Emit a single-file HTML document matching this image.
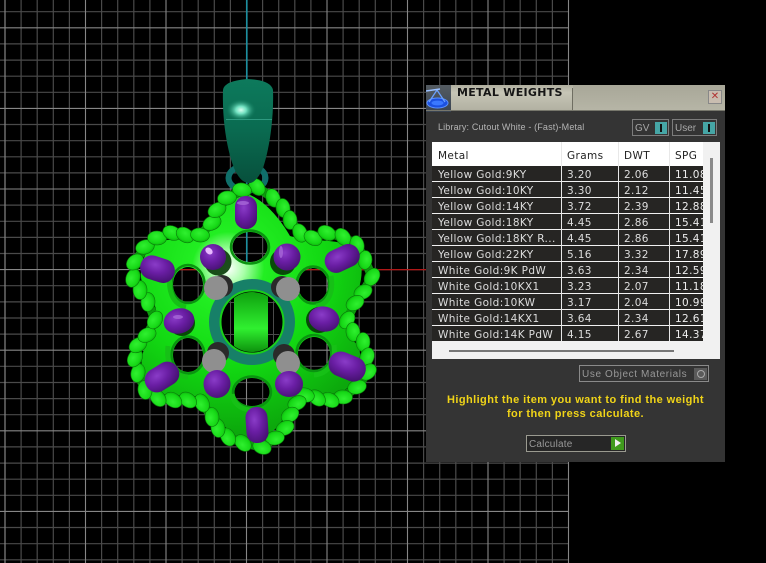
<!DOCTYPE html>
<html><head><meta charset="utf-8"><style>
html,body{margin:0;padding:0;background:#000;width:766px;height:563px;overflow:hidden}
#s{position:absolute;left:0;top:0}
#p{position:absolute;left:426px;top:85px;width:299px;height:377px;background:#343434;font-family:"DejaVu Sans","Liberation Sans",sans-serif;color:#ddd}
#p div{position:absolute;white-space:nowrap}
.t{left:6px;top:57px;width:288px;height:217px;background:#f1f1f1}
.h{background:#fff;left:6px;top:57px;width:271px;height:24px;overflow:hidden}
.c{font-size:10.5px;letter-spacing:.37px;line-height:19px}
.r{left:6px;width:271px;height:15px;background:#262523;color:#eee}
.sep{width:1px;background:#e8e8e8;top:57px;height:199px}
</style></head><body>
<svg id="s" width="766" height="563" viewBox="0 0 766 563">
<defs>
<radialGradient id="body" gradientUnits="userSpaceOnUse" cx="228" cy="268" r="165">
<stop offset="0" stop-color="#ffffff"/><stop offset=".1" stop-color="#aaffaa"/><stop offset=".22" stop-color="#22ee22"/><stop offset=".6" stop-color="#12d812"/><stop offset="1" stop-color="#0ca80c"/></radialGradient>
<linearGradient id="bale" x1="0" x2="0" y1="0" y2="1"><stop offset="0" stop-color="#0d7a5c"/><stop offset=".5" stop-color="#0a6a50"/><stop offset="1" stop-color="#07503c"/></linearGradient>
<radialGradient id="hl"><stop offset="0" stop-color="#d8fff0"/><stop offset=".35" stop-color="#70e0c0"/><stop offset="1" stop-color="#0d7a5c" stop-opacity="0"/></radialGradient>
<radialGradient id="pur" cx=".4" cy=".35" r=".75"><stop offset="0" stop-color="#8a3cc8"/><stop offset=".45" stop-color="#6a1ea4"/><stop offset="1" stop-color="#42106c"/></radialGradient>
<radialGradient id="bead" cx=".45" cy=".38" r=".72"><stop offset="0" stop-color="#30f030"/><stop offset=".65" stop-color="#16d816"/><stop offset="1" stop-color="#0aa00a"/></radialGradient>
<linearGradient id="bar" x1="0" x2="0" y1="0" y2="1"><stop offset="0" stop-color="#0c9c0c"/><stop offset=".6" stop-color="#30f030"/><stop offset="1" stop-color="#0a8a0a"/></linearGradient>
<clipPath id="inner"><circle cx="252" cy="322" r="30"/></clipPath>
<ellipse id="b" rx="9.5" ry="7" fill="url(#bead)" stroke="#0a7a0a" stroke-width=".6"/>
</defs>
<path fill="none" stroke="#4a4a4a" stroke-width="1.2" d="M5 0V563M21.1 0V563M37.2 0V563M53.3 0V563M69.4 0V563M101.6 0V563M117.7 0V563M133.8 0V563M149.9 0V563M182.1 0V563M198.2 0V563M214.3 0V563M230.4 0V563M262.6 0V563M278.7 0V563M294.8 0V563M310.9 0V563M343.1 0V563M359.2 0V563M375.3 0V563M391.4 0V563M423.6 0V563M439.7 0V563M455.8 0V563M471.9 0V563M504.1 0V563M520.2 0V563M536.3 0V563M552.4 0V563
M0 11.7H569M0 43.9H569M0 60.1H569M0 76.2H569M0 92.3H569M0 124.5H569M0 140.7H569M0 156.8H569M0 172.9H569M0 205.1H569M0 221.3H569M0 237.4H569M0 253.5H569M0 285.7H569M0 301.9H569M0 318H569M0 334.1H569M0 366.3H569M0 382.5H569M0 398.6H569M0 414.7H569M0 446.9H569M0 463.1H569M0 479.2H569M0 495.3H569M0 527.5H569M0 543.7H569M0 559.8H569"/>
<path fill="none" stroke="#868686" stroke-width="1.1" d="M5 0V563M85.5 0V563M166 0V563M246.5 0V563M327 0V563M407.5 0V563M488 0V563M568.5 0V563M0 27.8H569M0 108.4H569M0 189H569M0 269.6H569M0 350.2H569M0 430.8H569M0 511.4H569"/>
<rect x="246" y="0" width="1.6" height="262" fill="#1d8f9f"/>
<rect x="170" y="269" width="256" height="1.3" fill="#b01818"/>

<ellipse cx="247" cy="178" rx="18.5" ry="12.5" fill="none" stroke="#0f6f6a" stroke-width="6"/>

<!-- body with holes -->
<path fill="url(#body)" fill-rule="evenodd" d="M247 194 C262 198 280 218 290 236 C310 243 335 237 356 248 C366 265 362 290 350 305 C340 320 345 335 358 345 C364 365 360 380 342 392 C322 398 305 388 294 398 C288 415 272 440 252 442 C232 438 216 420 206 400 C195 392 170 399 148 390 C138 375 140 350 150 338 C160 322 158 305 148 294 C136 280 140 258 153 243 C172 236 195 244 206 232 C213 218 230 198 247 194 Z
M250 232 a17.5 15 0 1 0 .01 0 Z M188 267 a15 17.5 0 1 0 .01 0 Z M313 268 a15 17 0 1 0 .01 0 Z M188 338 a15 17 0 1 0 .01 0 Z M314 337 a16 16.5 0 1 0 .01 0 Z M252 378 a17.5 14 0 1 0 .01 0 Z"/>
<g fill="none" stroke="#0a9410" stroke-width="2.5">
<ellipse cx="250" cy="247" rx="19" ry="16.5"/>
<ellipse cx="188" cy="284" rx="16.5" ry="19"/>
<ellipse cx="313" cy="285" rx="16.5" ry="18.5"/>
<ellipse cx="188" cy="355" rx="16.5" ry="18.5"/>
<ellipse cx="314" cy="353" rx="17.5" ry="18"/>
<ellipse cx="252" cy="392" rx="19" ry="15.5"/>
</g>
<g fill="none" stroke="#16c016" stroke-width="5">
<path d="M170 275 C168 290 172 304 186 307"/>
<path d="M331 276 C334 292 328 305 316 306"/>
<path d="M168 346 C166 362 172 376 188 377"/>
<path d="M334 345 C336 362 328 374 314 375"/>
<path d="M232 394 C234 406 244 411 256 410"/>
</g>

<!-- twisted rope -->
<path fill="none" stroke="#0c9c0c" stroke-width="9" stroke-linejoin="round" d="M257 187 L273 198 L283 208 L290 220 L300 233 L313 238 L327 233 L343 237 L357 245 L365 260 L372 277 L363 292 L355 303 L347 320 L353 332 L363 342 L367 357 L368 372 L357 387 L343 397 L330 400 L317 398 L305 395 L297 403 L290 415 L285 428 L275 438 L262 447 L243 443 L228 437 L218 428 L212 417 L202 403 L188 400 L173 400 L158 398 L145 390 L138 373 L135 358 L138 345 L147 335 L155 320 L148 302 L140 290 L133 278 L135 262 L145 247 L157 238 L172 233 L185 235 L200 235 L212 223 L217 210 L227 198 L242 190 Z"/>
<g>
<use href="#b" transform="translate(257 187) rotate(50)"/>
<use href="#b" transform="translate(273 198) rotate(69)"/>
<use href="#b" transform="translate(283 208) rotate(82)"/>
<use href="#b" transform="translate(290 220) rotate(86)"/>
<use href="#b" transform="translate(300 233) rotate(68)"/>
<use href="#b" transform="translate(313 238) rotate(30)"/>
<use href="#b" transform="translate(327 233) rotate(28)"/>
<use href="#b" transform="translate(343 237) rotate(52)"/>
<use href="#b" transform="translate(357 245) rotate(76)"/>
<use href="#b" transform="translate(365 260) rotate(95)"/>
<use href="#b" transform="translate(372 277) rotate(124)"/>
<use href="#b" transform="translate(363 292) rotate(153)"/>
<use href="#b" transform="translate(355 303) rotate(150)"/>
<use href="#b" transform="translate(347 320) rotate(124)"/>
<use href="#b" transform="translate(353 332) rotate(84)"/>
<use href="#b" transform="translate(363 342) rotate(91)"/>
<use href="#b" transform="translate(367 357) rotate(110)"/>
<use href="#b" transform="translate(368 372) rotate(138)"/>
<use href="#b" transform="translate(357 387) rotate(165)"/>
<use href="#b" transform="translate(343 397) rotate(184)"/>
<use href="#b" transform="translate(330 400) rotate(208)"/>
<use href="#b" transform="translate(317 398) rotate(221)"/>
<use href="#b" transform="translate(305 395) rotate(196)"/>
<use href="#b" transform="translate(297 403) rotate(157)"/>
<use href="#b" transform="translate(290 415) rotate(146)"/>
<use href="#b" transform="translate(285 428) rotate(153)"/>
<use href="#b" transform="translate(275 438) rotate(170)"/>
<use href="#b" transform="translate(262 447) rotate(201)"/>
<use href="#b" transform="translate(243 443) rotate(226)"/>
<use href="#b" transform="translate(228 437) rotate(241)"/>
<use href="#b" transform="translate(218 428) rotate(261)"/>
<use href="#b" transform="translate(212 417) rotate(267)"/>
<use href="#b" transform="translate(202 403) rotate(245)"/>
<use href="#b" transform="translate(188 400) rotate(216)"/>
<use href="#b" transform="translate(173 400) rotate(214)"/>
<use href="#b" transform="translate(158 398) rotate(230)"/>
<use href="#b" transform="translate(145 390) rotate(261)"/>
<use href="#b" transform="translate(138 373) rotate(283)"/>
<use href="#b" transform="translate(135 358) rotate(300)"/>
<use href="#b" transform="translate(138 345) rotate(328)"/>
<use href="#b" transform="translate(147 335) rotate(334)"/>
<use href="#b" transform="translate(155 320) rotate(302)"/>
<use href="#b" transform="translate(148 302) rotate(273)"/>
<use href="#b" transform="translate(140 290) rotate(268)"/>
<use href="#b" transform="translate(133 278) rotate(290)"/>
<use href="#b" transform="translate(135 262) rotate(321)"/>
<use href="#b" transform="translate(145 247) rotate(343)"/>
<use href="#b" transform="translate(157 238) rotate(3)"/>
<use href="#b" transform="translate(172 233) rotate(24)"/>
<use href="#b" transform="translate(185 235) rotate(34)"/>
<use href="#b" transform="translate(200 235) rotate(6)"/>
<use href="#b" transform="translate(212 223) rotate(334)"/>
<use href="#b" transform="translate(217 210) rotate(331)"/>
<use href="#b" transform="translate(227 198) rotate(351)"/>
<use href="#b" transform="translate(242 190) rotate(10)"/>
</g>

<!-- center -->
<circle cx="252" cy="322" r="38" fill="#178068" stroke="#178068" stroke-width="10"/>
<circle cx="252" cy="322" r="31.5" fill="#000" stroke="#1ad01a" stroke-width="2"/>
<g clip-path="url(#inner)">
<rect x="219" y="290" width="66" height="64" fill="#000"/>
<rect x="230" y="291" width="1" height="64" fill="#4a4a4a"/>
<rect x="273" y="291" width="1" height="64" fill="#4a4a4a"/>
<rect x="220" y="302" width="64" height="1" fill="#4a4a4a"/>
<rect x="220" y="334" width="64" height="1" fill="#4a4a4a"/>
<rect x="234" y="290" width="34" height="64" fill="url(#bar)"/>
</g>

<!-- grey posts -->
<g fill="#2a2a2a"><circle cx="222" cy="286" r="11"/><circle cx="282" cy="287" r="11"/><circle cx="218" cy="353" r="11"/><circle cx="284" cy="355" r="11"/></g>
<g fill="#8f8f8f"><circle cx="216" cy="288" r="12"/><circle cx="288" cy="289" r="12"/><circle cx="214" cy="361" r="12"/><circle cx="288" cy="363" r="12"/></g>

<!-- purple pegs -->
<g fill="#063a06" opacity=".9"><circle cx="218" cy="262" r="13.5"/><circle cx="283" cy="262" r="13"/><circle cx="182" cy="323" r="13"/><circle cx="319" cy="320" r="13"/></g>
<g fill="url(#pur)">
<rect x="235" y="196" width="22" height="33" rx="10.5"/>
<circle cx="213" cy="257" r="13"/>
<circle cx="287" cy="257" r="13.5"/>
<rect x="140" y="257" width="35" height="24" rx="11.5" transform="rotate(18 157 269)"/>
<rect x="324" y="247" width="36" height="23" rx="11" transform="rotate(-25 342 258)"/>
<ellipse cx="179" cy="321" rx="15.5" ry="12.5" transform="rotate(-15 179 321)"/>
<ellipse cx="324" cy="319" rx="15.5" ry="12.5" transform="rotate(12 324 319)"/>
<rect x="144" y="365" width="36" height="24" rx="11.5" transform="rotate(-32 162 377)"/>
<rect x="328" y="354" width="38" height="25" rx="12" transform="rotate(22 347 367)"/>
<ellipse cx="217" cy="384" rx="13.5" ry="14"/>
<ellipse cx="289" cy="384" rx="14" ry="13"/>
<rect x="246" y="407" width="22" height="36" rx="10.5" transform="rotate(-4 257 425)"/>
</g>
<ellipse cx="209" cy="251" rx="4" ry="3" transform="rotate(40 209 251)" fill="#e8b8ff"/>
<g fill="#a868d8" opacity=".8"><ellipse cx="281" cy="252" rx="2" ry="6"/><ellipse cx="178" cy="317" rx="5" ry="2"/><ellipse cx="243" cy="203" rx="6" ry="2"/></g>

<!-- bale -->
<path fill="url(#bale)" d="M223 90 Q224 81 247 79 Q271 80 273 90 C274 120 269 150 263 168 Q256 184 248 183 Q240 182 234 168 C227 150 222 120 223 90 Z"/>
<ellipse cx="241" cy="110" rx="15" ry="11" fill="url(#hl)"/>
<rect x="226" y="119" width="46" height="1" fill="#2e9a80"/>
</svg>

<div id="p">
<div style="left:0;top:0;width:299px;height:25px;background:linear-gradient(#b0af9f,#c6c5b6 30%,#b2b1a2)"></div>
<div style="left:146px;top:3px;width:1px;height:22px;background:#6f6e62"></div>
<div style="left:147px;top:0;width:152px;height:25px;background:linear-gradient(#a8a798,#b6b5a6);"></div>
<div style="left:0;top:0;width:25px;height:27px;background:linear-gradient(#555c62,#3a4452)"></div>
<svg style="position:absolute;left:0;top:0" width="26" height="27" viewBox="0 0 26 27"><ellipse cx="11.5" cy="18" rx="10.5" ry="5" fill="#1b50e0" stroke="#5a90ff"/><ellipse cx="11.5" cy="18" rx="6" ry="2.4" fill="#3a78ff"/><path d="M3 17 L11 5 L19 17" fill="none" stroke="#6aa0ff" stroke-width="1.3"/><path d="M0 6 L14 4" stroke="#9ac0ff" stroke-width="1.4"/></svg>
<div style="left:31px;top:1px;font:bold 11px/13px 'DejaVu Sans',sans-serif;color:#161616;letter-spacing:.3px">METAL WEIGHTS</div>
<div style="left:282px;top:5px;width:12px;height:12px;background:#c9bdb0;border:1px solid #888;color:#b03030;font:10px/12px 'Liberation Sans',sans-serif;text-align:center">✕</div>
<div style="left:0;top:25px;width:299px;height:1px;background:#77776c"></div>

<div style="left:12px;top:36px;font:9px/12px 'Liberation Sans',sans-serif;color:#b4b4b4;letter-spacing:.15px">Library: Cutout White - (Fast)-Metal</div>
<div style="left:206px;top:34px;width:35px;height:15px;border:1px solid #7c7c7c;font:10px/17px 'Liberation Sans',sans-serif;color:#a8a8a8;text-indent:2px">GV<div style="right:1px;top:2px;width:12px;height:12px;background:#46a6a6"><div style="left:5px;top:2px;width:2px;height:8px;background:#111"></div></div></div>
<div style="left:246px;top:34px;width:43px;height:15px;border:1px solid #7c7c7c;font:10px/17px 'Liberation Sans',sans-serif;color:#a8a8a8;text-indent:2px">User<div style="right:1px;top:2px;width:12px;height:12px;background:#46a6a6"><div style="left:5px;top:2px;width:2px;height:8px;background:#111"></div></div></div>

<div class="t"></div>
<div class="h"></div>
<div class="c" style="left:12px;top:62px;color:#222">Metal</div>
<div class="c" style="left:141px;top:62px;color:#222">Grams</div>
<div class="c" style="left:198px;top:62px;color:#222">DWT</div>
<div class="c" style="left:249px;top:62px;color:#222">SPG</div>

<div class="r" style="top:81px"></div><div class="c" style="left:12px;top:81px">Yellow Gold:9KY</div><div class="c" style="left:141px;top:81px">3.20</div><div class="c" style="left:198px;top:81px">2.06</div>
<div class="r" style="top:97px"></div><div class="c" style="left:12px;top:97px">Yellow Gold:10KY</div><div class="c" style="left:141px;top:97px">3.30</div><div class="c" style="left:198px;top:97px">2.12</div>
<div class="r" style="top:113px"></div><div class="c" style="left:12px;top:113px">Yellow Gold:14KY</div><div class="c" style="left:141px;top:113px">3.72</div><div class="c" style="left:198px;top:113px">2.39</div>
<div class="r" style="top:129px"></div><div class="c" style="left:12px;top:129px">Yellow Gold:18KY</div><div class="c" style="left:141px;top:129px">4.45</div><div class="c" style="left:198px;top:129px">2.86</div>
<div class="r" style="top:145px"></div><div class="c" style="left:12px;top:145px">Yellow Gold:18KY R...</div><div class="c" style="left:141px;top:145px">4.45</div><div class="c" style="left:198px;top:145px">2.86</div>
<div class="r" style="top:161px"></div><div class="c" style="left:12px;top:161px">Yellow Gold:22KY</div><div class="c" style="left:141px;top:161px">5.16</div><div class="c" style="left:198px;top:161px">3.32</div>
<div class="r" style="top:177px"></div><div class="c" style="left:12px;top:177px">White Gold:9K PdW</div><div class="c" style="left:141px;top:177px">3.63</div><div class="c" style="left:198px;top:177px">2.34</div>
<div class="r" style="top:193px"></div><div class="c" style="left:12px;top:193px">White Gold:10KX1</div><div class="c" style="left:141px;top:193px">3.23</div><div class="c" style="left:198px;top:193px">2.07</div>
<div class="r" style="top:209px"></div><div class="c" style="left:12px;top:209px">White Gold:10KW</div><div class="c" style="left:141px;top:209px">3.17</div><div class="c" style="left:198px;top:209px">2.04</div>
<div class="r" style="top:225px"></div><div class="c" style="left:12px;top:225px">White Gold:14KX1</div><div class="c" style="left:141px;top:225px">3.64</div><div class="c" style="left:198px;top:225px">2.34</div>
<div class="r" style="top:241px"></div><div class="c" style="left:12px;top:241px">White Gold:14K PdW</div><div class="c" style="left:141px;top:241px">4.15</div><div class="c" style="left:198px;top:241px">2.67</div>

<div class="r" style="left:243px;width:34px;top:81px;height:175px;background:repeating-linear-gradient(#262523 0 15px,#fff 15px 16px);overflow:hidden;font-size:10.5px;letter-spacing:.37px;white-space:normal"><div style="left:6px;top:1px;width:40px;line-height:16px;white-space:pre-line">11.08
11.45
12.88
15.41
15.41
17.89
12.59
11.18
10.99
12.61
14.37</div></div>
<div class="sep" style="left:135px"></div>
<div class="sep" style="left:192px"></div>
<div class="sep" style="left:243px"></div>
<div style="left:284px;top:73px;width:3px;height:65px;background:#8a8a8a"></div>
<div style="left:23px;top:265px;width:225px;height:2px;background:#777"></div>

<div style="left:153px;top:280px;width:128px;height:15px;border:1px solid #8a8a8a;background:#333;font:10px/17px 'Liberation Sans',sans-serif;color:#989898;text-indent:2px;letter-spacing:.62px">Use Object Materials<div style="right:1px;top:2px;width:13px;height:12px;background:#5a5a5a"><div style="left:3px;top:2px;width:6px;height:6px;border:1px solid #aaa;border-radius:50%"></div></div></div>
<div style="left:0;width:299px;top:309px;text-align:center;font:bold 11px/13.5px 'Liberation Sans',sans-serif;color:#f0d418;white-space:normal;letter-spacing:.42px;text-indent:0">Highlight the item you want to find the weight<br>for then press calculate.</div>
<div style="left:100px;top:350px;width:98px;height:15px;border:1px solid #9a9a90;background:#262626;font:10px/17px 'Liberation Sans',sans-serif;color:#999;text-indent:2px;letter-spacing:.2px">Calculate<div style="right:1px;top:1px;width:13px;height:13px;background:#3f9a1c"><div style="left:4px;top:2px;width:0;height:0;border-left:6px solid #eee;border-top:4.5px solid transparent;border-bottom:4.5px solid transparent"></div></div></div>
</div>
</body></html>
